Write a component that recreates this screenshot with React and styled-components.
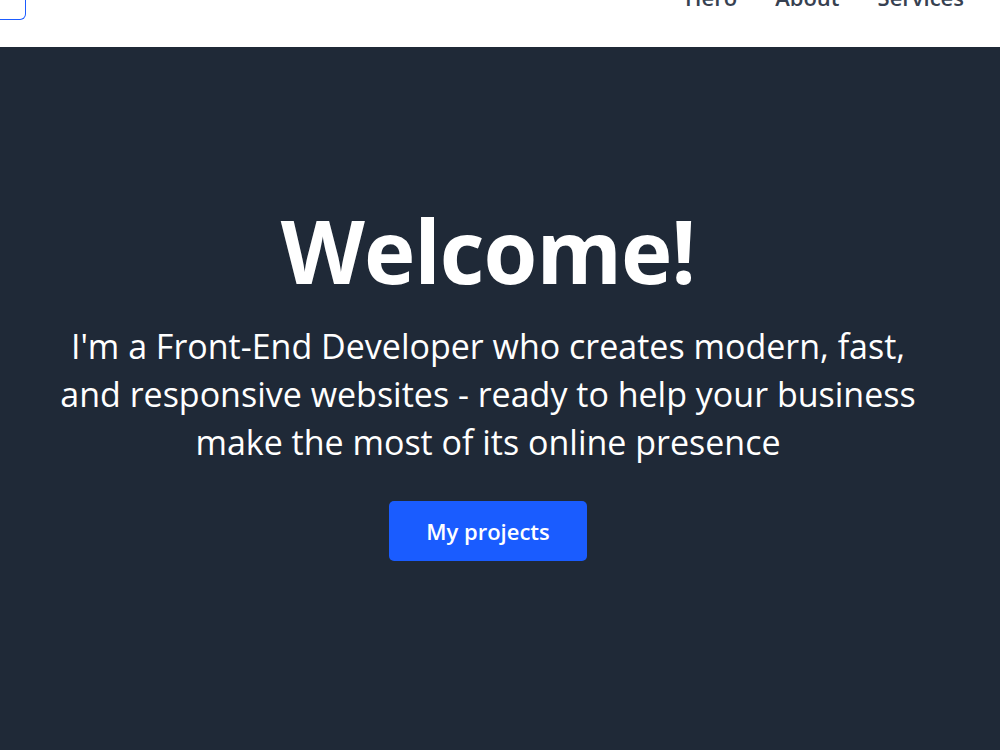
import React from 'react'
import styled, { createGlobalStyle } from 'styled-components'

const GlobalStyle = createGlobalStyle`
  html, body {
    margin: 0;
    padding: 0;
    overflow: hidden;
    background: #1f2937;
  }
  * {
    box-sizing: border-box;
  }
  body {
    font-family: "Open Sans", "Noto Sans", sans-serif;
  }
`

// page is shown scrolled a little, header partly above the fold
const Page = styled.div`
  margin-top: -53px;
`

const Header = styled.header`
  height: 100px;
  background: #ffffff;
  display: flex;
  align-items: center;
  justify-content: space-between;
  padding: 0 36px 0 0;
`

const MenuBox = styled.div`
  width: 26px;
  height: 46px;
  border: 1px solid #1d5cff;
  border-left: none;
  border-radius: 0 6px 6px 0;
`

const Nav = styled.nav`
  display: flex;
  gap: 38px;
`

const NavLink = styled.a`
  color: #374151;
  font-size: 22px;
  font-weight: 600;
  text-decoration: none;
`

const Hero = styled.section`
  background: #1f2937;
  min-height: 720px;
  display: flex;
  flex-direction: column;
  align-items: center;
  padding: 151px 24px 0 0;
  color: #ffffff;
  text-align: center;
`

const Title = styled.h1`
  margin: 0;
  font-size: 87px;
  font-weight: 700;
  line-height: 1.2;
  letter-spacing: -1px;
`

const Lead = styled.p`
  margin: 20px 0 0;
  max-width: 876px;
  font-size: 34px;
  line-height: 48px;
  font-weight: 400;
`

const Button = styled.button`
  margin-top: 35px;
  width: 198px;
  height: 60px;
  border: none;
  border-radius: 5px;
  background: #1a5cff;
  color: #ffffff;
  font-family: inherit;
  font-size: 22px;
  font-weight: 600;
  cursor: pointer;
`

export default function App() {
  return (
    <>
      <GlobalStyle />
      <Page>
        <Header>
          <MenuBox />
          <Nav>
            <NavLink href="#hero">Hero</NavLink>
            <NavLink href="#about">About</NavLink>
            <NavLink href="#services">Services</NavLink>
          </Nav>
        </Header>
        <Hero>
          <Title>Welcome!</Title>
          <Lead>
            I'm a Front-End Developer who creates modern, fast, and responsive websites - ready to help your business make the most of its online presence
          </Lead>
          <Button>My projects</Button>
        </Hero>
      </Page>
    </>
  )
}
